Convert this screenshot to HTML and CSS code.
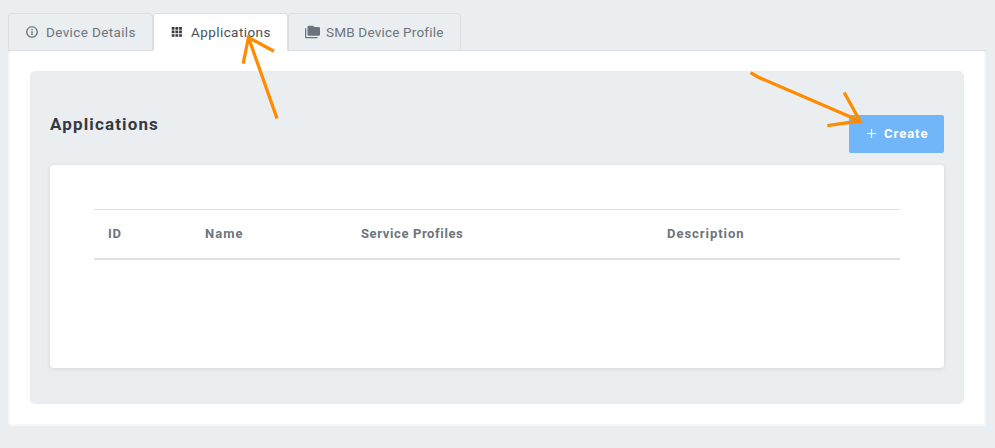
FILE: index.html
```html
<!DOCTYPE html>
<html lang="en">
<head>
<meta charset="utf-8">
<title>Applications</title>
<link rel="stylesheet" href="styles.css">
</head>
<body>
<nav class="tabs">
  <a class="tab tab-details">
    <svg class="tab-icon" width="14" height="14" viewBox="0 0 24 24"><path fill="currentColor" d="M11 9h2V7h-2m1 13c-4.410 0-8-3.590-8-8s3.590-8 8-8 8 3.590 8 8-3.590 8-8 8m0-18A10 10 0 1 0 12 22 10 10 0 0 0 12 2m-1 15h2v-6h-2v6z" stroke="currentColor" stroke-width=".5"/></svg>
    <span class="label-details">Device Details</span>
  </a>
  <a class="tab tab-apps active">
    <svg class="tab-icon" width="14" height="14" viewBox="0 0 14 14"><path fill="currentColor" d="M1.700 2h2.800v2.700H1.700zm3.700 0h2.800v2.700H5.400zm3.700 0h2.800v2.700H9.100zM1.700 5.600h2.800v2.700H1.700zm3.700 0h2.800v2.700H5.400zm3.700 0h2.800v2.700H9.100zM1.700 9.200h2.800v2.600H1.700zm3.700 0h2.800v2.600H5.400zm3.700 0h2.800v2.600H9.100z"/></svg>
    <span class="label-apps">Applications</span>
  </a>
  <a class="tab tab-profile">
    <svg class="tab-icon folder" width="15" height="14" viewBox="0 0 24 22"><path fill="currentColor" d="M22 3h-7l-2-2H6a2 2 0 0 0-2 2v12a2 2 0 0 0 2 2h16a2 2 0 0 0 2-2V5a2 2 0 0 0-2-2M2 5H0v14a2 2 0 0 0 2 2h18v-2H2V5z"/></svg>
    <span class="label-profile">SMB Device Profile</span>
  </a>
</nav>
<main class="panel">
  <section class="section">
    <header class="section-head">
      <h1 class="title"><span>Applications</span></h1>
      <button class="create" type="button">
        <svg width="9" height="9" viewBox="0 0 9 9"><path stroke="currentColor" stroke-width="1.2" d="M4.500 0v9M0 4.500h9"/></svg>
        <span class="label-create">Create</span>
      </button>
    </header>
    <div class="card">
      <table class="table">
        <thead>
          <tr>
            <th class="col-id">ID</th>
            <th class="col-name">Name</th>
            <th class="col-service">Service Profiles</th>
            <th class="col-description">Description</th>
          </tr>
        </thead>
      </table>
    </div>
  </section>
</main>
<svg class="arrows" width="995" height="448" viewBox="0 0 995 448">
  <path d="M276.500 117L248.500 37.500M243.500 62L248.500 37.500L272.500 50.500"/>
  <path d="M752 73.500L758 77L860 121M845 94L860 121L829 125.500"/>
</svg>
</body>
</html>
```
FILE: styles.css
```css
* {
  box-sizing: border-box;
}

body {
  margin: 0;
  height: 448px;
  padding: 13px 9px 0 8px;
  overflow: hidden;
  background: #eaeef1;
  color: #6c757d;
  font-family: Roboto, "Liberation Sans", sans-serif;
  font-size: 14px;
}

.tabs {
  display: flex;
  height: 38px;
  border-bottom: 1px solid #dcdfe2;
}

.tab {
  display: flex;
  align-items: center;
  height: 38px;
  padding-left: 16px;
  border: 1px solid #dcdfe2;
  border-radius: 4px 4px 0 0;
  font-size: 13.5px;
  white-space: nowrap;
}

.tab-details { width: 145px; }
.tab-apps { width: 135px; }
.tab-profile { width: 173px; }

.tab.active {
  border-bottom-color: #fff;
  background: #fff;
  color: #495057;
}

.tab-icon {
  flex: none;
  margin-right: 7px;
}

.tab-apps .tab-icon { color: #343a40; }

.folder { margin-right: 6px; }

.label-details { letter-spacing: 0.37px; }
.label-apps { letter-spacing: 0.42px; }
.label-profile { letter-spacing: 0.2px; }

.panel {
  width: 978px;
  height: 375px;
  padding: 20px;
  border: 2px solid #f7f7f7;
  border-top: 0;
  border-radius: 4px;
  background: #fff;
}

.section {
  height: 333px;
  padding: 44px 20px 36px;
  border-radius: 5px;
  background: #eaeef1;
}

.section-head {
  display: flex;
  justify-content: space-between;
  height: 50px;
}

.title {
  margin: 0;
  color: #343a40;
  font-size: 17px;
  font-weight: 700;
  line-height: 18px;
  letter-spacing: 1.13px;
}

.create {
  display: flex;
  align-items: center;
  width: 95px;
  height: 38px;
  padding: 0 0 1px 18px;
  border: 0;
  border-radius: 2px;
  background: #71b6f9;
  color: #fff;
  font: 700 13px Roboto, sans-serif;
  letter-spacing: 1px;
}

.create svg { margin-right: 8px; }

.card {
  height: 203px;
  padding: 44px;
  border-radius: 4px;
  background: #fff;
  box-shadow: 0 1px 4px rgba(50, 58, 70, 0.12);
}

.table {
  width: 806px;
  height: 51px;
  border-top: 1px solid #dee2e6;
  border-bottom: 2px solid #dee2e6;
  border-spacing: 0;
  table-layout: fixed;
}

th {
  padding: 0 0 1px 14px;
  font-size: 13px;
  font-weight: 700;
  text-align: left;
  letter-spacing: 0.62px;
}

.col-id { width: 97px; }
.col-name { width: 156px; letter-spacing: 1px; }
.col-service { width: 306px; }
.col-description { letter-spacing: 0.97px; }

.arrows {
  position: absolute;
  top: 0;
  left: 0;
  fill: none;
  stroke: #ff8c00;
  stroke-width: 3.3;
  stroke-linecap: square;
  pointer-events: none;
}
```
